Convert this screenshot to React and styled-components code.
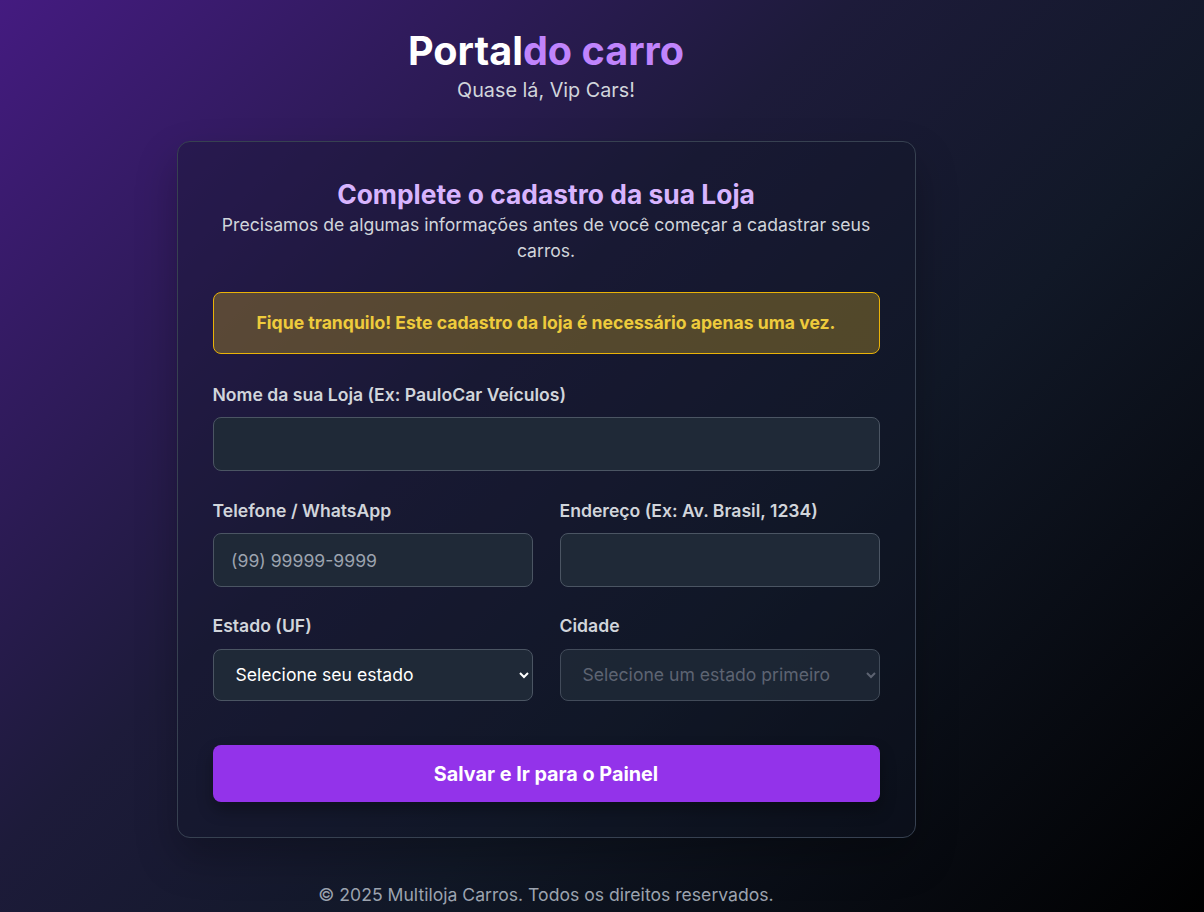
import styled, { createGlobalStyle } from "styled-components";

const GlobalStyle = createGlobalStyle`
  * { box-sizing: border-box; }
  body {
    margin: 0;
    font-family: Inter, "Noto Sans", sans-serif;
    background: #05060a;
  }
`;

const Page = styled.div`
  min-height: 100vh;
  background: linear-gradient(135deg, #441b80 0%, #1d1b3a 40%, #111827 62%, #000000 100%);
  color: #fff;
`;

const Column = styled.div`
  width: 1092px;
  display: flex;
  flex-direction: column;
  align-items: center;
  padding-top: 29px;
`;

const Brand = styled.h1`
  margin: 0;
  font-size: 39.6px;
  line-height: 44px;
  font-weight: 700;
  color: #fff;
`;

const Accent = styled.span`
  color: #c084fc;
`;

const Greeting = styled.p`
  margin: 2px 0 0;
  font-size: 19.8px;
  line-height: 30.8px;
  color: #d1d5db;
`;

const Card = styled.section`
  width: 739px;
  margin-top: 35px;
  padding: 35px;
  border: 1px solid #374151;
  border-radius: 13px;
  background: rgba(17, 24, 39, 0.35);
  box-shadow: 0 20px 40px rgba(0, 0, 0, 0.25);
`;

const CardTitle = styled.h2`
  margin: 0;
  text-align: center;
  font-size: 26.4px;
  line-height: 35.2px;
  font-weight: 700;
  color: #d8b4fe;
`;

const CardText = styled.p`
  margin: 0;
  text-align: center;
  font-size: 17.6px;
  line-height: 26.4px;
  color: #d1d5db;
`;

const Notice = styled.div`
  margin-top: 27px;
  padding: 17px 16px;
  border: 1px solid #eab308;
  border-radius: 8px;
  background: rgba(146, 119, 42, 0.5);
  color: #eecb3c;
  font-size: 17.6px;
  line-height: 26.4px;
  font-weight: 700;
  text-align: center;
`;

const Form = styled.form`
  margin-top: 28px;
  display: flex;
  flex-direction: column;
  gap: 26.4px;
`;

const Row = styled.div`
  display: grid;
  grid-template-columns: 1fr 1fr;
  gap: 27px;
`;

const Field = styled.div`
  display: flex;
  flex-direction: column;
  gap: 8.8px;
`;

const Label = styled.label`
  font-size: 17.6px;
  line-height: 26.4px;
  font-weight: 600;
  color: #d1d5db;
`;

const Input = styled.input`
  width: 100%;
  height: 54px;
  padding: 0 17.6px;
  border: 1px solid #4b5563;
  border-radius: 8px;
  background: #1f2937;
  color: #fff;
  font-family: inherit;
  font-size: 17.6px;
  outline: none;

  &::placeholder {
    color: #9ca3af;
  }
`;

const Select = styled.select`
  width: 100%;
  height: 52px;
  padding: 0 12px 0 18px;
  border: 1px solid #4b5563;
  border-radius: 8px;
  background: #1f2937;
  color: ${(p) => (p.disabled ? "#6b7280" : "#fff")};
  font-family: inherit;
  font-size: 17.6px;
  outline: none;
  opacity: ${(p) => (p.disabled ? 0.85 : 1)};
`;

const Submit = styled.button`
  margin-top: 18px;
  height: 57px;
  border: none;
  border-radius: 8px;
  background: #9333ea;
  color: #fff;
  font-family: inherit;
  font-size: 19.8px;
  font-weight: 700;
  box-shadow: 0 8px 16px rgba(0, 0, 0, 0.3);
  cursor: pointer;
`;

const Footer = styled.footer`
  margin-top: 44px;
  padding-bottom: 16px;
  font-size: 17.6px;
  line-height: 26.4px;
  color: #9ca3af;
`;

export default function App() {
  return (
    <Page>
      <GlobalStyle />
      <Column>
        <Brand>
          Portal<Accent>do carro</Accent>
        </Brand>
        <Greeting>Quase lá, Vip Cars!</Greeting>

        <Card>
          <CardTitle>Complete o cadastro da sua Loja</CardTitle>
          <CardText>
            Precisamos de algumas informações antes de você começar a cadastrar seus carros.
          </CardText>

          <Notice>Fique tranquilo! Este cadastro da loja é necessário apenas uma vez.</Notice>

          <Form onSubmit={(e) => e.preventDefault()}>
            <Field>
              <Label htmlFor="nome">Nome da sua Loja (Ex: PauloCar Veículos)</Label>
              <Input id="nome" type="text" />
            </Field>

            <Row>
              <Field>
                <Label htmlFor="tel">Telefone / WhatsApp</Label>
                <Input id="tel" type="tel" placeholder="(99) 99999-9999" />
              </Field>
              <Field>
                <Label htmlFor="end">Endereço (Ex: Av. Brasil, 1234)</Label>
                <Input id="end" type="text" />
              </Field>
            </Row>

            <Row>
              <Field>
                <Label htmlFor="uf">Estado (UF)</Label>
                <Select id="uf" defaultValue="">
                  <option value="">Selecione seu estado</option>
                </Select>
              </Field>
              <Field>
                <Label htmlFor="cidade">Cidade</Label>
                <Select id="cidade" disabled defaultValue="">
                  <option value="">Selecione um estado primeiro</option>
                </Select>
              </Field>
            </Row>

            <Submit type="submit">Salvar e Ir para o Painel</Submit>
          </Form>
        </Card>

        <Footer>© 2025 Multiloja Carros. Todos os direitos reservados.</Footer>
      </Column>
    </Page>
  );
}
